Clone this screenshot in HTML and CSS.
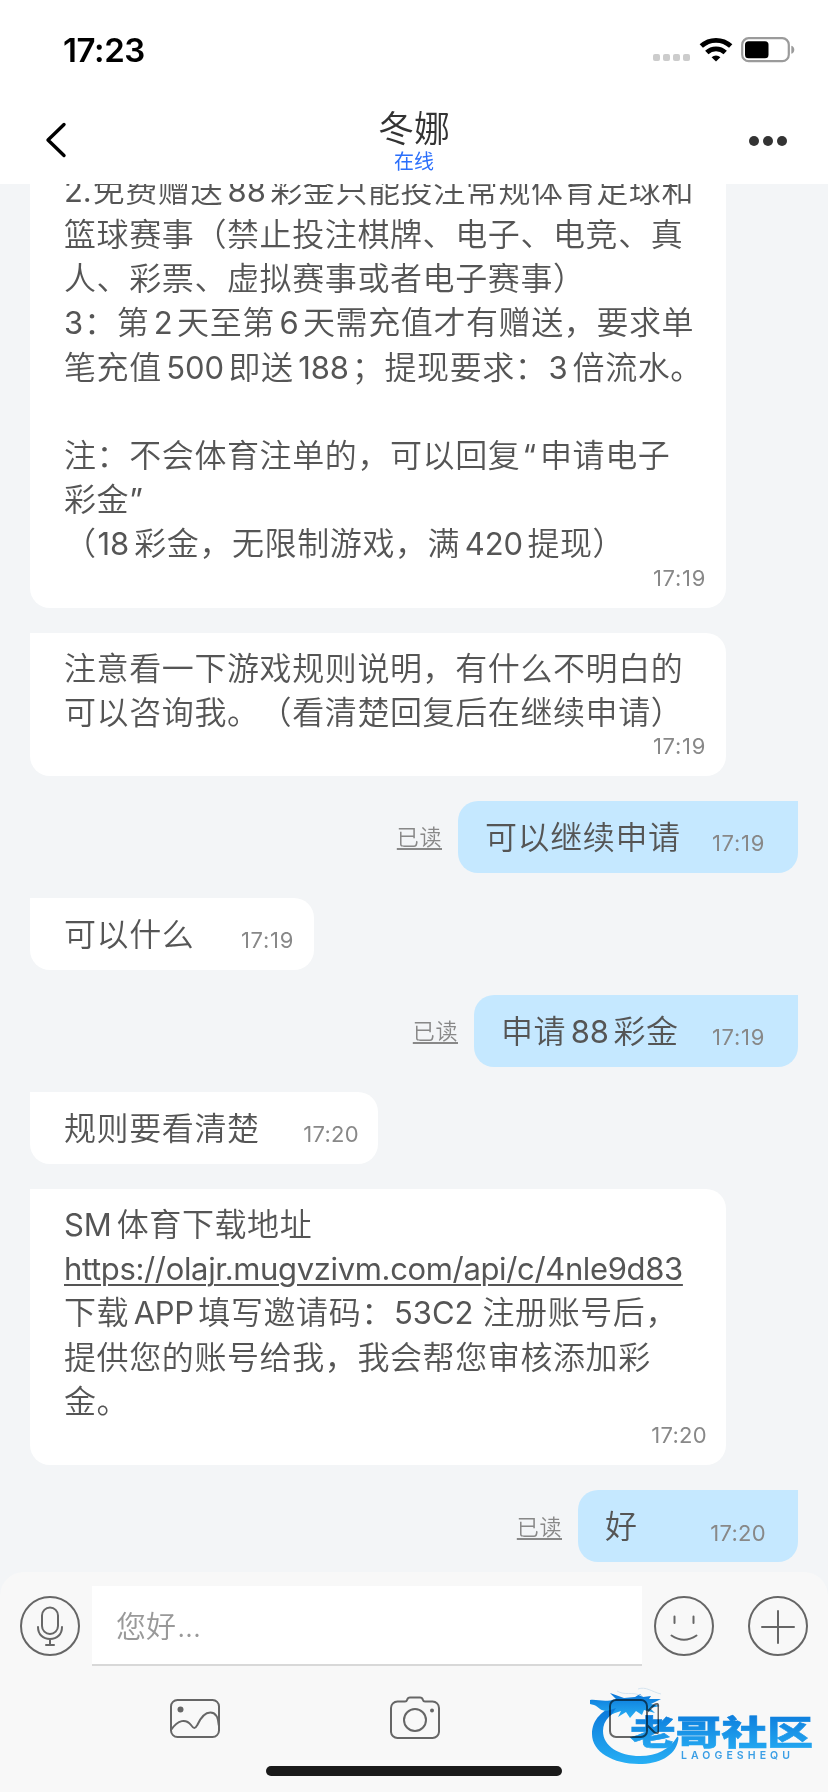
FILE: index.html
```html
<!DOCTYPE html>
<html lang="zh-CN">
<head>
<meta charset="utf-8">
<title>冬娜</title>
<link rel="stylesheet" href="styles.css">
</head>
<body>
<div class="screen">
  <header class="header">
    <div class="status">
      <span class="clock">17:23</span>
      <div class="status-icons">
        <div class="signal"><i></i><i></i><i></i><i></i></div>
        <svg class="wifi" width="34" height="26" viewBox="0 0 34 26"><g fill="none" stroke="#000" stroke-width="4.8"><path d="M2.300 9.100a21.500 21.500 0 0 1 29.400 0"/><path d="M7.800 15.600a13.300 13.300 0 0 1 18.400 0"/></g><path d="M17 24.600l-4.400-4.400a6.600 6.600 0 0 1 8.800 0z"/></svg>
        <svg class="battery" width="55" height="26" viewBox="0 0 55 26"><rect x="1.200" y="1.200" width="46.600" height="23" rx="6.500" fill="#fff" stroke="#9b9b9b" stroke-width="2.200"/><rect x="4" y="4.200" width="23.500" height="17" rx="3.500"/><path d="M50.300 8.800c4 1 4 7 0 8z" fill="#9b9b9b"/></svg>
      </div>
    </div>
    <div class="nav">
      <svg class="back" width="24" height="36" viewBox="0 0 24 36"><path d="M20 2.500L4 18l16 15.500" fill="none" stroke="#000" stroke-width="3.400" stroke-linecap="round" stroke-linejoin="round"/></svg>
      <div class="peer">
        <div class="peer-name">冬娜</div>
        <div class="peer-state">在线</div>
      </div>
      <div class="more"><i></i><i></i><i></i></div>
    </div>
  </header>

  <main class="chat">
    <div class="bubble block">
      <p><b class="lead">2.</b>免费赠送<b>88</b>彩金只能投注常规体育足球和</p>
      <p>篮球赛事（禁止投注棋牌、电子、电竞、真</p>
      <p>人、彩票、虚拟赛事或者电子赛事）</p>
      <p><b class="lead">3</b>：第<b>2</b>天至第<b>6</b>天需充值才有赠送，要求单</p>
      <p>笔充值<b>500</b>即送<b class="tail">188</b>；提现要求：<b class="lead-gap">3</b>倍流水。</p>
      <p>&nbsp;</p>
      <p>注：不会体育注单的，可以回复<q class="open">“</q>申请电子</p>
      <p>彩金<q>”</q></p>
      <p>（<b class="lead-gap">18</b>彩金，无限制游戏，满<b>420</b>提现）</p>
      <time>17:19</time>
    </div>
    <div class="bubble block">
      <p>注意看一下游戏规则说明，有什么不明白的</p>
      <p>可以咨询我。（看清楚回复后在继续申请）</p>
      <time>17:19</time>
    </div>
    <div class="row mine">
      <span class="read">已读</span>
      <div class="bubble line w340"><p>可以继续申请</p><time>17:19</time></div>
    </div>
    <div class="row">
      <div class="bubble line w284"><p>可以什么</p><time>17:19</time></div>
    </div>
    <div class="row mine">
      <span class="read">已读</span>
      <div class="bubble line w324"><p>申请<b>88</b>彩金</p><time>17:19</time></div>
    </div>
    <div class="row">
      <div class="bubble line w348"><p>规则要看清楚</p><time class="wide">17:20</time></div>
    </div>
    <div class="bubble block">
      <p><b class="lead sm">SM</b>体育下载地址</p>
      <p><a class="link">https://olajr.mugvzivm.com/api/c/4nle9d83</a></p>
      <p>下载<b class="app">APP</b>填写邀请码：<b class="code">53C2</b>注册账号后，</p>
      <p>提供您的账号给我，我会帮您审核添加彩</p>
      <p>金。</p>
      <time class="wide">17:20</time>
    </div>
    <div class="row mine">
      <span class="read">已读</span>
      <div class="bubble line w220"><p>好</p><time class="wide">17:20</time></div>
    </div>
  </main>

  <footer class="composer">
    <div class="input-row">
      <svg class="mic" width="60" height="60" viewBox="0 0 60 60"><g fill="none" stroke="#666" stroke-width="2" stroke-linecap="round"><circle cx="30" cy="30" r="29"/><rect x="22" y="11.500" width="16" height="26.500" rx="8"/><path d="M18 31c0 7.500 5 12 12 12s12-4.500 12-12M30 43v5.500M26 49h8"/></g></svg>
      <div class="field">您好<span>...</span></div>
      <svg class="smile" width="60" height="60" viewBox="0 0 60 60"><g fill="none" stroke="#666" stroke-width="2" stroke-linecap="round"><circle cx="30" cy="30" r="29"/><path d="M20.500 20.500v6.500M39.500 20.500v6.500M17.500 39.500c8 5.500 17 5.500 25 0"/></g></svg>
      <svg class="plus" width="60" height="60" viewBox="0 0 60 60"><g fill="none" stroke="#666" stroke-width="2" stroke-linecap="round"><circle cx="30" cy="30" r="29"/><path d="M14 31h32M30 15v32"/></g></svg>
    </div>
    <div class="tools">
      <svg width="50" height="44" viewBox="0 0 50 44"><g fill="none" stroke="#666" stroke-width="2"><rect x="1" y="5" width="48" height="37" rx="6.500"/><path d="M1 35c7-10.500 15-11.500 20-5 2.800 4 4 4 6.300 0 3-6.500 7-12.500 13-12.500 5 0 8 4.500 8.500 13"/></g><circle cx="10.500" cy="14.500" r="3" fill="#666"/></svg>
      <svg width="50" height="44" viewBox="0 0 50 44"><g fill="none" stroke="#666" stroke-width="2"><path d="M7.500 6.500H15c1.500 0 2-.8 2.300-2C17.700 3 18.500 2.500 20 2.500h10c1.500 0 2.300.5 2.700 2 .3 1.200.8 2 2.300 2h7.500A6.500 6.500 0 0 1 49 13v24a6.500 6.500 0 0 1-6.500 6h-35A6.500 6.500 0 0 1 1 37V13a6.500 6.500 0 0 1 6.500-6.500z"/><circle cx="25" cy="25" r="11"/></g><circle cx="42" cy="15.500" r="2" fill="#666"/></svg>
      <svg width="50" height="44" viewBox="0 0 50 44"><g fill="none" stroke="#666" stroke-width="2"><rect x="1" y="5" width="37" height="37" rx="6"/><path d="M38 17l7-7q4.500-3 4.500 2v23q0 5-4.500 2l-7-7"/></g></svg>
    </div>
    <div class="home"></div>
  </footer>

  <svg class="brand" width="236" height="96" viewBox="0 0 236 96">
    <defs><linearGradient id="sea" x1="0" y1="0" x2="0" y2="1"><stop offset="0" stop-color="#0877df"/><stop offset="1" stop-color="#28b4fb"/></linearGradient></defs>
    <g fill="url(#sea)">
      <path d="M30 20C12 25 2 36 2 50c0 18 21 30 47 30 20 0 36-8 39-23 1-4 0-5-1-4-7 12-20 19-37 19-21 0-37-10-37-25 0-11 8-19 24-24z"/>
      <path d="M0 16c8-1 14 3 26-1l-6-6 14 5 11-1 5-3 3 3 8-1-2 3 12 0-10 5 9 2-10 2 5 5-11-3-2 5-6-4-6 7-4-6-8 5 3-6-9 3 4-6-9 3c-7 0-8-4-13-6-6-1-10-3-14-6z"/>
    </g>
    <path d="M27 7c8 5 15 0 25 5M48 5c8-3 14 3 23 5" fill="none" stroke="#dcebf6" stroke-width="1"/>
    <text class="brand-name" x="40" y="61" textLength="183" lengthAdjust="spacingAndGlyphs" fill="url(#sea)" stroke="url(#sea)">老哥社区</text>
    <text class="brand-latin" x="91" y="75" textLength="109">LAOGESHEQU</text>
  </svg>
</div>
</body>
</html>
```
FILE: styles.css
```css
* { box-sizing: border-box; }
body { margin: 0; background: #f3f5f7; font-family: Inter, "Noto Sans CJK SC", sans-serif; }
p { margin: 0; }
svg { display: block; flex: none; }
.screen { position: relative; width: 828px; height: 1792px; display: flex; flex-direction: column; overflow: hidden; background: #f3f5f7; }

.header { flex: none; height: 184px; background: #fff; }
.status { height: 98px; padding: 2px 33px 0 63px; display: flex; align-items: center; justify-content: space-between; }
.clock { font-size: 33px; font-weight: 600; letter-spacing: -0.4px; color: #000; }
.status-icons { display: flex; align-items: center; }
.signal { display: flex; gap: 3px; margin: 15px 9px 0 0; }
.signal i { width: 7px; height: 7px; border-radius: 2px; background: #ccc; }
.wifi { margin-right: 8px; }
.battery { margin-right: -1px; }
.nav { height: 86px; padding: 0 41px 0 44px; display: flex; justify-content: space-between; }
.back { margin-top: 24px; }
.peer { margin-left: 11px; text-align: center; }
.peer-name { font: 36px/40px "Noto Sans CJK SC", sans-serif; color: #333; margin-top: 8px; font-weight: 350; }
.peer-state { font: 20px/24px "Noto Sans CJK SC", sans-serif; color: #2b6ffb; margin-top: 3px; }
.more { display: flex; gap: 4px; margin-top: 38px; }
.more i { width: 10px; height: 10px; border-radius: 50%; background: #333; }

.chat { flex: 1; min-height: 0; overflow: hidden; padding: 0 30px 10px; display: flex; flex-direction: column; justify-content: flex-end; gap: 25px; }
.chat > * { flex: none; }
.bubble { background: #fff; border-radius: 0 20px 20px 20px; color: #555; padding-left: 34px; }
.bubble p { font: 32px/44.200px "Noto Sans CJK SC", sans-serif; font-weight: 350; letter-spacing: 0.6px; white-space: nowrap; text-spacing-trim: space-all; text-autospace: no-autospace; }
.bubble b, .bubble q, .link { font-family: Inter, sans-serif; font-weight: 400; font-size: 31px; line-height: 1; letter-spacing: -0.1px; }
.bubble b { margin: 0 4.500px; }
.bubble b.lead { margin: 0 1px 0 0; }
.bubble b.sm { margin-right: 5px; }
.bubble b.lead-gap { margin: 0 5px 0 1px; }
.bubble b.tail { margin: 0 3px 0 4.500px; }
.bubble b.code { margin: 0 9px 0 0; letter-spacing: 0; }
.bubble b.app { letter-spacing: -0.3px; }
.bubble q { quotes: none; }
.bubble q::before, .bubble q::after { content: none; }
.bubble q.open { margin: 0 4px 0 2px; }
.block { width: 696px; padding-top: 11px; padding-bottom: 18px; display: flex; flex-direction: column; }
.bubble time { font-size: 22px; line-height: 24px; letter-spacing: 0.7px; color: #888; }
.bubble time.wide { letter-spacing: 0.3px; }
.block time { align-self: flex-end; margin: 2px 20px 0 0; }
.block time.wide { margin-right: 19px; }
.row { display: flex; align-items: center; height: 72px; }
.mine { justify-content: flex-end; }
.line { height: 72px; display: flex; align-items: center; justify-content: space-between; padding-right: 20px; }
.line p { margin-top: -4px; }
.line time { margin-top: 13px; }
.line time.wide { margin-right: -1px; }
.mine .bubble { background: #c5e8ff; border-radius: 20px 0 20px 20px; padding-left: 27px; padding-right: 33px; }
.w340 { width: 340px; }
.w284 { width: 284px; }
.w324 { width: 324px; }
.w348 { width: 348px; }
.w220 { width: 220px; }
.read { font: 22px/30px "Noto Sans CJK SC", sans-serif; font-weight: 350; letter-spacing: 0.6px; color: #888; margin: -3px 16px 0 0; text-decoration: underline; text-decoration-thickness: 2px; text-underline-offset: 3px; }
.bubble .link { letter-spacing: -0.350px; text-decoration: underline; text-decoration-thickness: 2px; text-underline-offset: 4px; }

.composer { flex: none; height: 220px; background: #f8f8f8; border-radius: 24px 24px 0 0; }
.input-row { height: 94px; padding: 14px 20px 0; display: flex; }
.mic, .smile, .plus { margin-top: 10px; }
.field { width: 550px; height: 80px; margin: 0 12px; padding-left: 24px; background: #fff; border-bottom: 2px solid #d8d8d8; font: 30px/76px "Noto Sans CJK SC", sans-serif; font-weight: 350; color: #999; }
.field span { font-family: Inter, sans-serif; margin-left: 1px; letter-spacing: -0.6px; }
.plus { margin-left: 34px; }
.tools { height: 72px; padding: 29px 169px 0 170px; display: flex; justify-content: space-between; }
.home { width: 296px; height: 10px; border-radius: 5px; background: #1a1a1a; margin: 28px auto 0; }

.brand { position: absolute; left: 590px; top: 1684px; mix-blend-mode: multiply; }
.brand-name { font: 900 34px "Noto Sans CJK SC", sans-serif; stroke-width: 0.6; }
.brand-latin { font: 600 10.500px/1 Inter, sans-serif; fill: #3ba3ec; }
```
